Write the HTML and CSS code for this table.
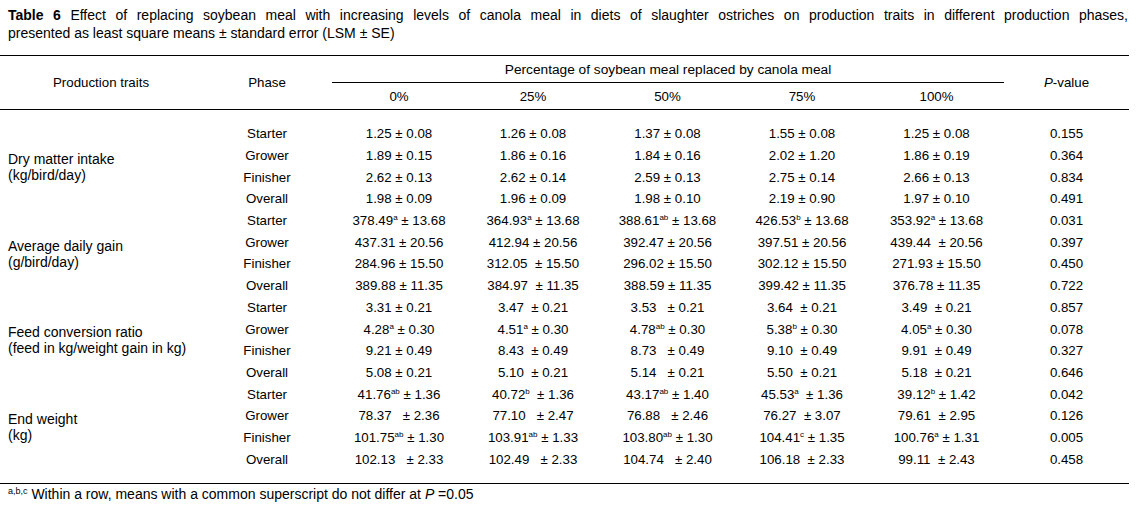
FILE: index.html
```html
<!DOCTYPE html>
<html>
<head>
<meta charset="utf-8">
<link rel="stylesheet" href="styles.css">
</head>
<body>
<div class="caption">
  <div class="cap-line1"><b>Table 6</b> Effect of replacing soybean meal with increasing levels of canola meal in diets of slaughter ostriches on production traits in different production phases,</div>
  <div class="cap-line2">presented as least square means ± standard error (LSM ± SE)</div>
</div>
<table class="tbl">
  <colgroup>
    <col class="c-trait"><col class="c-phase"><col class="c-val"><col class="c-val"><col class="c-val5"><col class="c-val"><col class="c-val5"><col class="c-p">
  </colgroup>
  <thead>
    <tr class="h1">
      <th rowspan="2" class="hd">Production traits</th>
      <th rowspan="2" class="hd">Phase</th>
      <th colspan="5" class="hd pct">Percentage of soybean meal replaced by canola meal</th>
      <th rowspan="2" class="hd"><i>P</i>-value</th>
    </tr>
    <tr class="h2">
      <th class="hd">0%</th><th class="hd">25%</th><th class="hd">50%</th><th class="hd">75%</th><th class="hd">100%</th>
    </tr>
  </thead>
  <tbody>
    <tr class="gap gap-top"><td colspan="8"></td></tr>
    <tr><td rowspan="4" class="trait">Dry matter intake<br>(kg/bird/day)</td><td class="ph">Starter</td><td>1.25 ± 0.08</td><td>1.26 ± 0.08</td><td>1.37 ± 0.08</td><td>1.55 ± 0.08</td><td>1.25 ± 0.08</td><td>0.155</td></tr>
    <tr><td class="ph">Grower</td><td>1.89 ± 0.15</td><td>1.86 ± 0.16</td><td>1.84 ± 0.16</td><td>2.02 ± 1.20</td><td>1.86 ± 0.19</td><td>0.364</td></tr>
    <tr><td class="ph">Finisher</td><td>2.62 ± 0.13</td><td>2.62 ± 0.14</td><td>2.59 ± 0.13</td><td>2.75 ± 0.14</td><td>2.66 ± 0.13</td><td>0.834</td></tr>
    <tr><td class="ph">Overall</td><td>1.98 ± 0.09</td><td>1.96 ± 0.09</td><td>1.98 ± 0.10</td><td>2.19 ± 0.90</td><td>1.97 ± 0.10</td><td>0.491</td></tr>
    <tr><td rowspan="4" class="trait">Average daily gain<br>(g/bird/day)</td><td class="ph">Starter</td><td>378.49<span class="sup">a</span> ± 13.68</td><td>364.93<span class="sup">a</span> ± 13.68</td><td>388.61<span class="sup">ab</span> ± 13.68</td><td>426.53<span class="sup">b</span> ± 13.68</td><td>353.92<span class="sup">a</span> ± 13.68</td><td>0.031</td></tr>
    <tr><td class="ph">Grower</td><td>437.31 ± 20.56</td><td>412.94 ± 20.56</td><td>392.47 ± 20.56</td><td>397.51 ± 20.56</td><td>439.44  ± 20.56</td><td>0.397</td></tr>
    <tr><td class="ph">Finisher</td><td>284.96 ± 15.50</td><td>312.05  ± 15.50</td><td>296.02 ± 15.50</td><td>302.12 ± 15.50</td><td>271.93 ± 15.50</td><td>0.450</td></tr>
    <tr><td class="ph">Overall</td><td>389.88 ± 11.35</td><td>384.97  ± 11.35</td><td>388.59 ± 11.35</td><td>399.42 ± 11.35</td><td>376.78 ± 11.35</td><td>0.722</td></tr>
    <tr><td rowspan="4" class="trait">Feed conversion ratio<br>(feed in kg/weight gain in kg)</td><td class="ph">Starter</td><td>3.31 ± 0.21</td><td>3.47  ± 0.21</td><td>3.53   ± 0.21</td><td>3.64  ± 0.21</td><td>3.49  ± 0.21</td><td>0.857</td></tr>
    <tr><td class="ph">Grower</td><td>4.28<span class="sup">a</span> ± 0.30</td><td>4.51<span class="sup">a</span> ± 0.30</td><td>4.78<span class="sup">ab</span> ± 0.30</td><td>5.38<span class="sup">b</span> ± 0.30</td><td>4.05<span class="sup">a</span> ± 0.30</td><td>0.078</td></tr>
    <tr><td class="ph">Finisher</td><td>9.21 ± 0.49</td><td>8.43  ± 0.49</td><td>8.73   ± 0.49</td><td>9.10  ± 0.49</td><td>9.91  ± 0.49</td><td>0.327</td></tr>
    <tr><td class="ph">Overall</td><td>5.08 ± 0.21</td><td>5.10  ± 0.21</td><td>5.14   ± 0.21</td><td>5.50  ± 0.21</td><td>5.18  ± 0.21</td><td>0.646</td></tr>
    <tr><td rowspan="4" class="trait">End weight<br>(kg)</td><td class="ph">Starter</td><td>41.76<span class="sup">ab</span> ± 1.36</td><td>40.72<span class="sup">b</span>  ± 1.36</td><td>43.17<span class="sup">ab</span> ± 1.40</td><td>45.53<span class="sup">a</span>  ± 1.36</td><td>39.12<span class="sup">b</span> ± 1.42</td><td>0.042</td></tr>
    <tr><td class="ph">Grower</td><td>78.37   ± 2.36</td><td>77.10   ± 2.47</td><td>76.88   ± 2.46</td><td>76.27  ± 3.07</td><td>79.61  ± 2.95</td><td>0.126</td></tr>
    <tr><td class="ph">Finisher</td><td>101.75<span class="sup">ab</span> ± 1.30</td><td>103.91<span class="sup">ab</span> ± 1.33</td><td>103.80<span class="sup">ab</span> ± 1.30</td><td>104.41<span class="sup">c</span> ± 1.35</td><td>100.76<span class="sup">a</span> ± 1.31</td><td>0.005</td></tr>
    <tr><td class="ph">Overall</td><td>102.13   ± 2.33</td><td>102.49   ± 2.33</td><td>104.74   ± 2.40</td><td>106.18  ± 2.33</td><td>99.11  ± 2.43</td><td>0.458</td></tr>
    <tr class="gap gap-bottom"><td colspan="8"></td></tr>
  </tbody>
</table>
<div class="foot"><span class="fsup">a,b,c</span> Within a row, means with a common superscript do not differ at <i>P</i> =0.05</div>
</body>
</html>
```

FILE: styles.css
```css
html, body {
  margin: 0;
  padding: 0;
  background: #ffffff;
}
body {
  font-family: "Liberation Sans", Arial, sans-serif;
  color: #000000;
}
.caption {
  width: 1120px;
  padding: 6px 8px 0 8px;
  font-size: 14px;
  line-height: 18px;
}
.cap-line1 {
  text-align: justify;
  text-align-last: justify;
  white-space: nowrap;
}
.tbl {
  margin-top: 13px;
  width: 1129px;
  border-collapse: collapse;
  table-layout: fixed;
  border-top: 1px solid #000;
  border-bottom: 1px solid #000;
  font-size: 13.3px;
}
.c-trait { width: 202px; }
.c-phase { width: 130px; }
.c-val { width: 134px; }
.c-val5 { width: 135px; }
.c-p { width: 125px; }
.hd {
  font-weight: normal;
  font-size: 13.3px;
  padding: 0;
  text-align: center;
  vertical-align: middle;
  line-height: 15px;
}
.hd.pct { font-size: 13.7px; }
.h1 th { height: 26px; }
.h2 th { height: 26px; }
.pct { border-bottom: 1px solid #000; }
.h2 th, .h1 th[rowspan] { border-bottom: 1px solid #000; }
.tbl td {
  padding: 0;
  height: 21.7px;
  text-align: center;
  vertical-align: middle;
  white-space: pre;
  line-height: 14px;
}
.tbl tr.gap-top td { height: 13.5px; }
.tbl tr.gap-bottom td { height: 12px; }
.tbl td.trait {
  text-align: left;
  padding-left: 8px;
  font-size: 14px;
  line-height: 16px;
  white-space: normal;
}
.tbl td.ph { font-size: 13.3px; }
.sup {
  font-size: 8px;
  vertical-align: 5px;
  line-height: 0;
}
.foot {
  margin-top: 2px;
  padding-left: 8px;
  font-size: 14px;
  line-height: 16px;
}
.fsup {
  font-size: 9px;
  vertical-align: 5px;
  line-height: 0;
}
```
